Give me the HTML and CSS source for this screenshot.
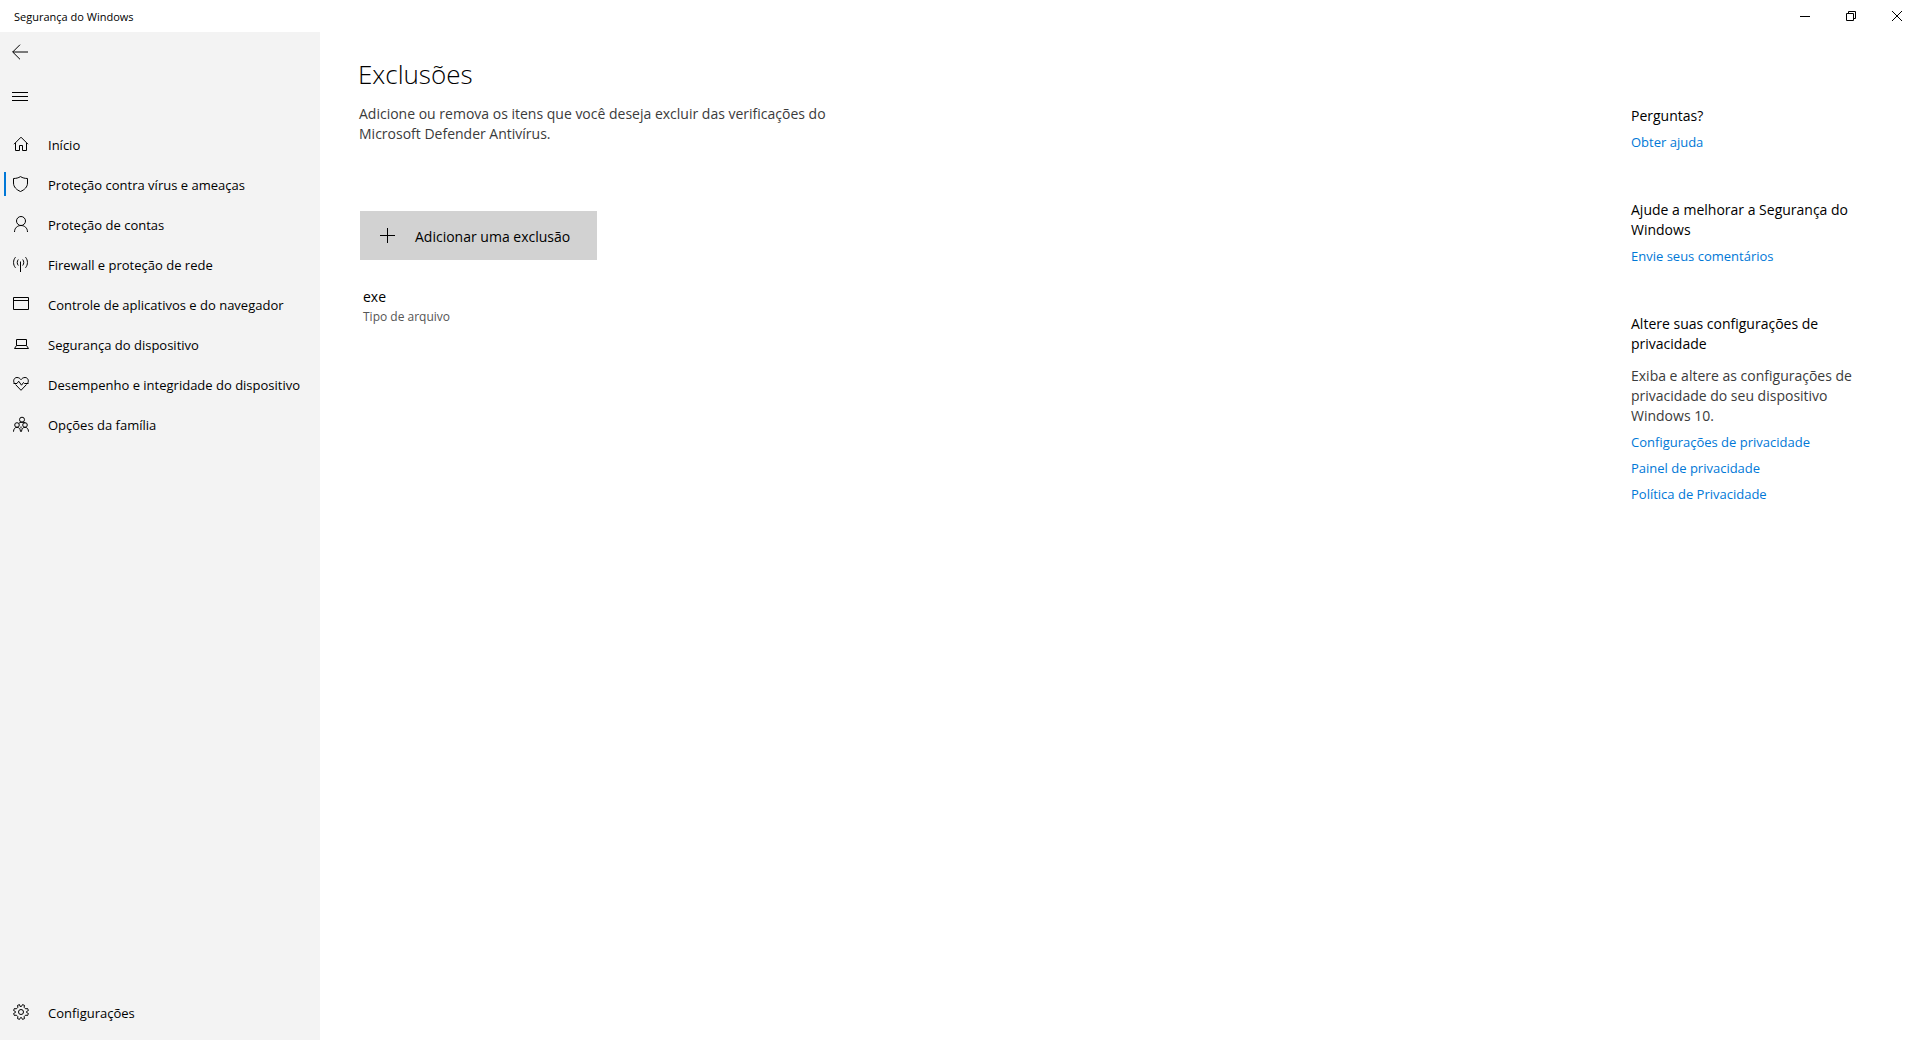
FILE: index.html
```html
<!DOCTYPE html>
<html lang="pt-BR">
<head>
<meta charset="utf-8">
<meta name="viewport" content="width=device-width, initial-scale=1">
<title>Segurança do Windows</title>
<link rel="stylesheet" href="styles.css">
</head>
<body>
<header class="titlebar">
  <span class="titlebar-name">Segurança do Windows</span>
  <div class="window-controls">
    <button class="window-button" type="button" aria-label="Minimizar"><svg class="window-icon" viewBox="0 0 10 10"><path d="M0 5.500h10"/></svg></button>
    <button class="window-button" type="button" aria-label="Restaurar"><svg class="window-icon" viewBox="0 0 10 10"><path d="M.5 2.500h7v7h-7zM2.500 2.500v-2h7v7h-2"/></svg></button>
    <button class="window-button" type="button" aria-label="Fechar"><svg class="window-icon" viewBox="0 0 10 10"><path d="M0 0l10 10M10 0L0 10"/></svg></button>
  </div>
</header>
<div class="shell">
  <nav class="sidebar" aria-label="Navegação">
    <button class="icon-button" type="button" aria-label="Voltar"><svg class="icon" viewBox="0 0 16 16"><path d="M16 8H.7M8 .7L.7 8 8 15.300"/></svg></button>
    <button class="icon-button" type="button" aria-label="Menu"><svg class="icon" viewBox="0 0 16 16"><path d="M0 4.500h16M0 8.500h16M0 12.500h16"/></svg></button>
    <ul class="nav-list">
      <li><a class="nav-link" href="#inicio"><svg class="icon" viewBox="0 0 16 16"><path d="M1 8.200L8 1.200l7 7M2.500 7v7.500h4v-5h3v5h4V7"/></svg><span class="nav-text">Início</span></a></li>
      <li><a class="nav-link current" href="#virus" aria-current="page"><svg class="icon" viewBox="0 0 16 16"><path d="M7.500.6C5.500 1.900 3 2.500.5 2.500V7c0 4 3 6.800 7 8.500 4-1.700 7-4.500 7-8.500V2.500C12 2.500 9.500 1.900 7.500.6z"/></svg><span class="nav-text">Proteção contra vírus e ameaças</span></a></li>
      <li><a class="nav-link" href="#contas"><svg class="icon" viewBox="0 0 16 16"><circle cx="8" cy="5" r="4.500"/><path d="M1.500 16c0-4 2.900-6.500 6.500-6.500s6.500 2.500 6.500 6.500"/></svg><span class="nav-text">Proteção de contas</span></a></li>
      <li><a class="nav-link" href="#firewall"><svg class="icon" viewBox="0 0 16 16"><path d="M7.500 5.500V16M5.300 3.500c-1.400 1.600-1.400 4.400 0 6M9.700 3.500c1.400 1.600 1.400 4.400 0 6M2.500 1.200c-2.600 3-2.600 7.600 0 10.600M12.500 1.200c2.600 3 2.600 7.600 0 10.600"/></svg><span class="nav-text">Firewall e proteção de rede</span></a></li>
      <li><a class="nav-link" href="#aplicativos"><svg class="icon" viewBox="0 0 16 16"><path d="M.5 1.500h15v12H.5zM.5 4.500h15"/></svg><span class="nav-text">Controle de aplicativos e do navegador</span></a></li>
      <li><a class="nav-link" href="#dispositivo"><svg class="icon" viewBox="0 0 16 16"><path d="M3.500 9.500v-6h10v6M3.500 9.500h10l2 3H1.500z"/></svg><span class="nav-text">Segurança do dispositivo</span></a></li>
      <li><a class="nav-link" href="#desempenho"><svg class="icon" viewBox="0 0 16 16"><path d="M1.300 7.200C-.2 4.500 1.200 1.500 4 1.500c1.800 0 3 .9 4 2.200 1-1.300 2.200-2.200 4-2.200 2.800 0 4.200 3 2.700 5.700M2.500 8.500L8 14.300l5.500-5.800M.5 7.500H4l1.700-2.300 2.800 4 2-2.700 1 1h4"/></svg><span class="nav-text">Desempenho e integridade do dispositivo</span></a></li>
      <li><a class="nav-link" href="#familia"><svg class="icon" viewBox="0 0 16 16"><circle cx="9" cy="3.700" r="2.500"/><circle cx="4" cy="9" r="2.300"/><circle cx="12" cy="9" r="2.300"/><path d="M.5 15.700c0-2.700 1.500-4.400 3.500-4.400s3.500 1.700 3.500 4.400M8.500 15.700c0-2.700 1.500-4.400 3.500-4.400s3.500 1.700 3.500 4.400M5.800 7.400C6.400 6.600 7.500 6.200 9 6.200s2.600.3 3.200.8M8 10.500v2"/></svg><span class="nav-text">Opções da família</span></a></li>
    </ul>
    <a class="nav-link" href="#configuracoes"><svg class="icon" viewBox="0 0 16 16"><circle cx="8" cy="8" r="2.500"/><path d="M7 2.400L6.500.6l-2 .8.400 1.900-1.600 1.600-1.900-.4-.8 2L2.400 7.500v1L.6 9.500l.8 2 1.900-.4 1.600 1.600-.4 1.900 2 .8L7.500 13.600h1l1 1.800 2-.8-.4-1.900 1.600-1.600 1.900.4.8-2-1.800-1v-1l1.800-1-.8-2-1.900.4-1.600-1.600.4-1.900-2-.8-1 1.800z"/></svg><span class="nav-text">Configurações</span></a>
  </nav>
  <main class="content">
    <section class="page">
      <h1 class="page-title">Exclusões</h1>
      <p class="lead">Adicione ou remova os itens que você deseja excluir das verificações do Microsoft Defender Antivírus.</p>
      <button class="add-button" type="button"><svg class="plus" viewBox="0 0 15 15"><path d="M0 7.500h15M7.500 0v15"/></svg><span class="add-text">Adicionar uma exclusão</span></button>
      <ul class="exclusions">
        <li class="exclusion"><span class="exclusion-name">exe</span><span class="exclusion-type">Tipo de arquivo</span></li>
      </ul>
    </section>
    <aside class="help">
      <section class="help-group">
        <h2 class="help-title">Perguntas?</h2>
        <a class="help-link" href="#ajuda">Obter ajuda</a>
      </section>
      <section class="help-group">
        <h2 class="help-title">Ajude a melhorar a Segurança do Windows</h2>
        <a class="help-link" href="#comentarios">Envie seus comentários</a>
      </section>
      <section class="help-group">
        <h2 class="help-title">Altere suas configurações de privacidade</h2>
        <p class="help-text">Exiba e altere as configurações de privacidade do seu dispositivo Windows 10.</p>
        <a class="help-link" href="#privacidade">Configurações de privacidade</a>
        <a class="help-link" href="#painel">Painel de privacidade</a>
        <a class="help-link" href="#politica">Política de Privacidade</a>
      </section>
    </aside>
  </main>
</div>
</body>
</html>
```
FILE: styles.css
```css
* {
  box-sizing: border-box;
}

body {
  margin: 0;
  min-height: 100vh;
  display: flex;
  flex-direction: column;
  background: #fff;
  color: #000;
  font: 14px/20px "Segoe UI", "Open Sans", "Noto Sans", sans-serif;
}

button {
  border: 0;
  background: none;
  color: inherit;
  font: inherit;
}

h1, h2, p, ul {
  margin: 0;
  padding: 0;
  font-weight: 400;
}

ul {
  list-style: none;
}

a {
  text-decoration: none;
}

svg {
  display: block;
  flex: none;
  fill: none;
  stroke: #000;
}

.titlebar {
  display: flex;
  justify-content: space-between;
  align-items: center;
  height: 32px;
  padding-left: 14px;
}

.titlebar-name {
  padding-top: 2px;
  font-size: 11px;
}

.window-controls {
  display: flex;
}

.window-button {
  display: grid;
  place-items: center;
  width: 46px;
  height: 32px;
  padding: 0;
}

.window-icon {
  width: 10px;
  height: 10px;
}

.shell {
  flex: 1;
  display: flex;
}

.sidebar {
  display: flex;
  flex-direction: column;
  flex: none;
  width: 320px;
  padding-bottom: 8px;
  background: #f3f3f3;
}

.icon-button {
  display: flex;
  align-items: center;
  width: 48px;
  height: 40px;
  padding: 0 12px;
}

.icon-button + .icon-button {
  margin-top: 4px;
}

.icon {
  width: 16px;
  height: 16px;
}

.nav-list {
  flex: 1;
  padding-top: 8px;
}

.nav-link {
  position: relative;
  display: flex;
  align-items: center;
  gap: 19px;
  height: 40px;
  padding-left: 13px;
  color: #000;
  font-size: 13px;
}

.nav-text,
.add-text {
  padding-top: 2px;
}

.current::before {
  content: "";
  position: absolute;
  left: 4px;
  top: 8px;
  width: 2px;
  height: 24px;
  background: #0078d7;
}

.content {
  flex: 1;
  display: flex;
  justify-content: space-between;
  padding: 20px 49px 20px 38px;
}

.page {
  width: 490px;
}

.page-title {
  padding-top: 2px;
  font-size: 26px;
  font-weight: 300;
  line-height: 40px;
}

.lead {
  margin: 10px 0 67px;
  padding-left: 1px;
  color: #3b3b3b;
}

.add-button {
  display: flex;
  align-items: center;
  gap: 20px;
  height: 49px;
  margin-left: 2px;
  padding: 0 27px 0 20px;
  background: #d2d2d2;
}

.plus {
  width: 15px;
  height: 15px;
}

.exclusions {
  padding: 27px 0 0 5px;
}

.exclusion {
  display: flex;
  flex-direction: column;
}

.exclusion-type {
  color: #555;
  font-size: 12px;
}

.help {
  display: flex;
  flex-direction: column;
  gap: 48px;
  width: 240px;
  padding-top: 54px;
}

.help-group {
  display: flex;
  flex-direction: column;
  align-items: flex-start;
  gap: 6px;
}

.help-title {
  font-size: 14px;
}

.help-text {
  padding-top: 6px;
  color: #3b3b3b;
}

.help-link {
  color: #0078d7;
  font-size: 13px;
}
```
